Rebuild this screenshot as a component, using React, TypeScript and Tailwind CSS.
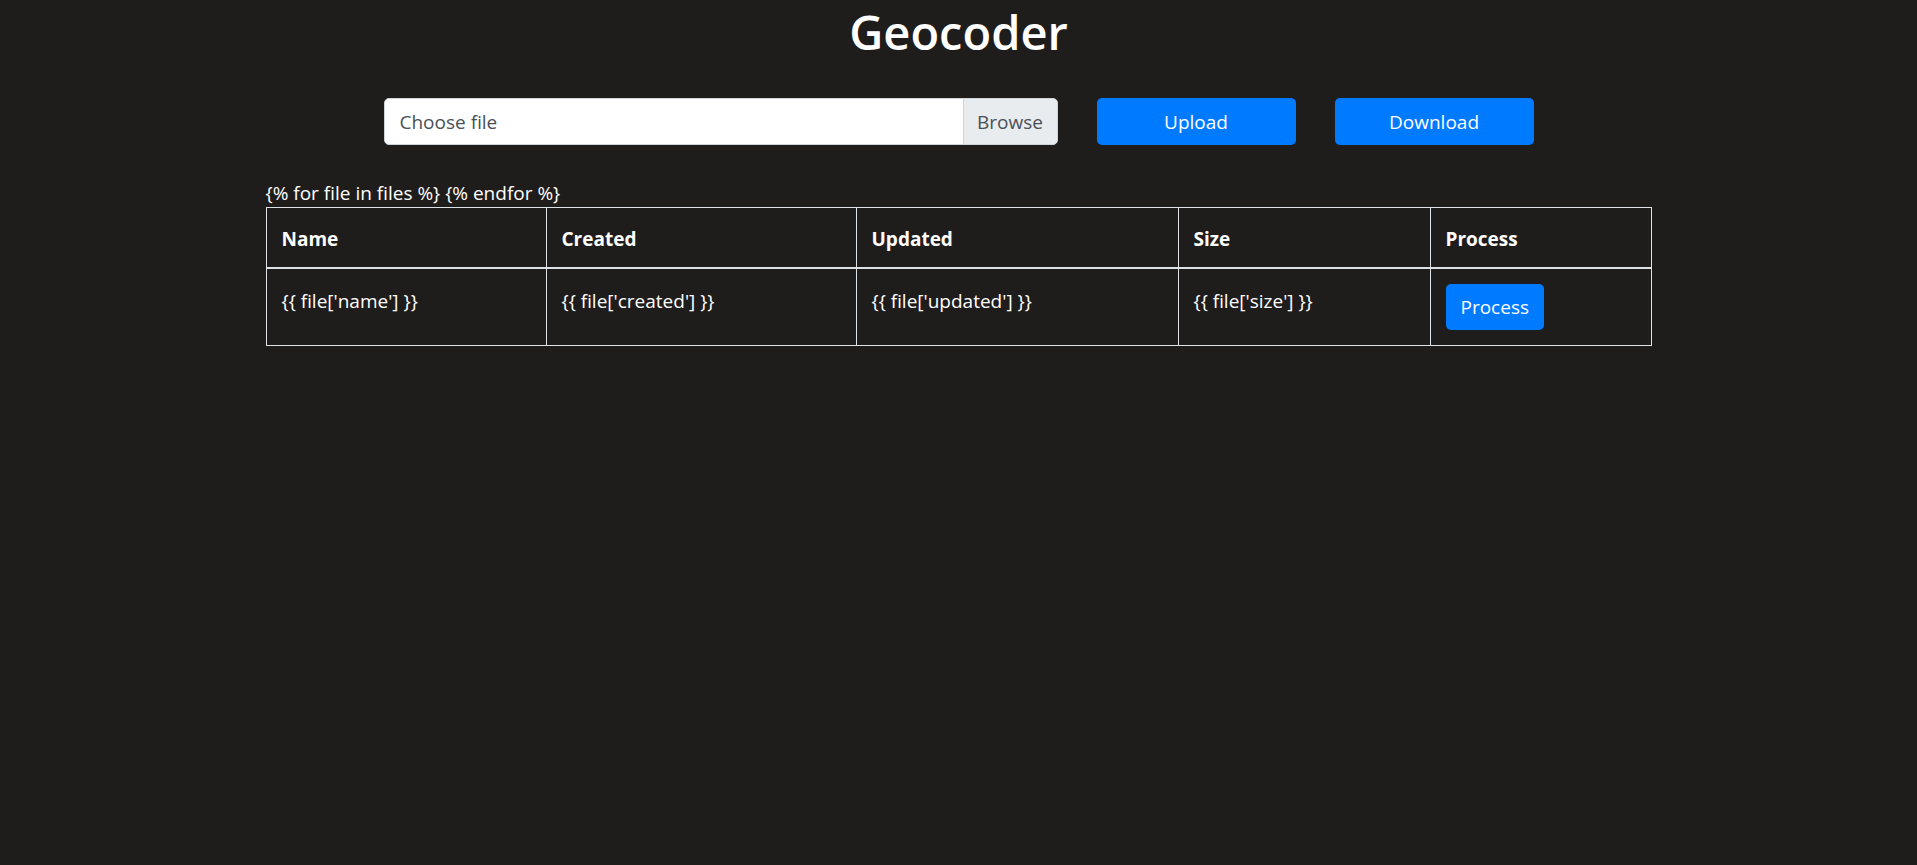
const columns = [
  { key: 'name', label: 'Name', width: 'w-[280px]' },
  { key: 'created', label: 'Created', width: 'w-[310px]' },
  { key: 'updated', label: 'Updated', width: 'w-[322px]' },
  { key: 'size', label: 'Size', width: 'w-[252px]' },
];

export default function App() {
  return (
    <div className="min-h-[865px] bg-[#1f1d1c] text-white font-['Open_Sans',sans-serif] text-[19px] leading-[30px]">
      <h1 className="pt-[4px] text-center text-[47px] leading-[56px] font-semibold">Geocoder</h1>

      <div className="flex justify-center items-center gap-[39px] mt-[38px]">
        <label className="flex w-[674px] h-[47px] rounded-[5px] border border-[#ced4da] bg-white overflow-hidden text-[#495057]">
          <span className="flex-1 px-[15px] flex items-center">Choose file</span>
          <span className="w-[94px] flex items-center justify-center bg-[#e9ecef] border-l border-[#ced4da]">
            Browse
          </span>
        </label>
        <button className="w-[199px] h-[47px] rounded-[5px] bg-[#007bff] text-white">Upload</button>
        <button className="w-[199px] h-[47px] rounded-[5px] bg-[#007bff] text-white">Download</button>
      </div>

      <div className="w-[1386px] mx-auto mt-[35px]">
        <p className="leading-[27px]">{'{% for file in files %} {% endfor %}'}</p>
        <table className="w-full border-collapse table-fixed">
          <thead>
            <tr>
              {columns.map((c) => (
                <th
                  key={c.key}
                  className={`${c.width} text-left font-bold px-[15px] pt-[16px] pb-[13px] border border-[#dee2e6] border-b-2`}
                >
                  {c.label}
                </th>
              ))}
              <th className="text-left font-bold px-[15px] pt-[16px] pb-[13px] border border-[#dee2e6] border-b-2">
                Process
              </th>
            </tr>
          </thead>
          <tbody>
            <tr>
              {columns.map((c) => (
                <td key={c.key} className="align-top px-[15px] pt-[17px] pb-[15px] border border-[#dee2e6]">
                  {`{{ file['${c.key}'] }}`}
                </td>
              ))}
              <td className="align-top px-[15px] pt-[15px] pb-[15px] border border-[#dee2e6]">
                <button className="px-[15px] py-[8px] rounded-[5px] bg-[#007bff] text-white leading-[30px]">
                  Process
                </button>
              </td>
            </tr>
          </tbody>
        </table>
      </div>
    </div>
  );
}
